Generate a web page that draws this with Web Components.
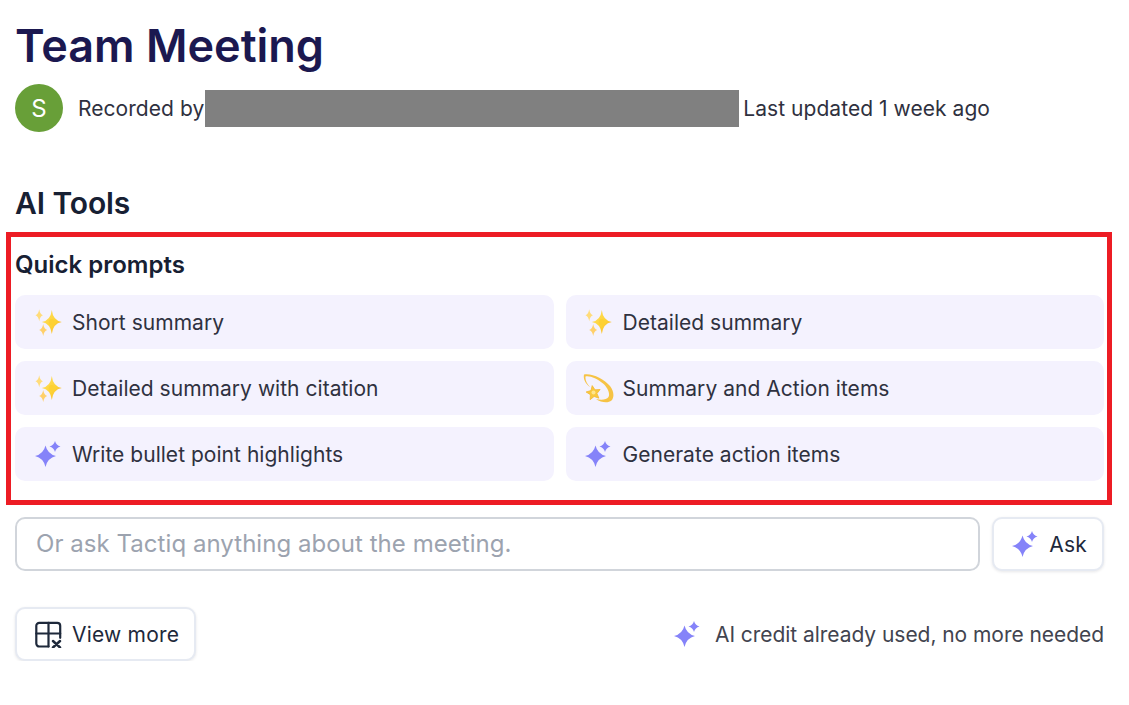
<!DOCTYPE html>
<html>
<head>
<meta charset="utf-8">
<title>Team Meeting</title>
<style>
    html, body { margin: 0; background: #fff; }
    body { font-family: Inter, "Liberation Sans", sans-serif; }
</style>
</head>
<body>
<meeting-page></meeting-page>

<script>
const ICONS = {
    sparkles: `<svg class="emoji" width="30" height="30" viewBox="0 0 30 30">
        <linearGradient id="gold" x1="0" y1="0" x2="1" y2="1">
            <stop offset="0" stop-color="#ffe26a"/>
            <stop offset=".6" stop-color="#fdd133"/>
            <stop offset="1" stop-color="#f8a83c"/>
        </linearGradient>
        <path fill="url(#gold)" d="M18.800 3Q20 13.500 28.800 15Q20 16.500 18.800 27Q17.600 16.500 8.800 15Q17.600 13.500 18.800 3z"/>
        <circle cx="18.800" cy="15" r="3" fill="#fdd133"/>
        <path fill="#ffdc7a" d="M6.200 2.300Q7 7.300 9.900 8.300Q7 9.300 6.200 14.300Q5.400 9.300 2.500 8.300Q5.400 7.300 6.200 2.300z"/>
        <path fill="#ffd06a" d="M10.200 17Q11 22 14.200 23Q11 24 10.200 29Q9.400 24 6.200 23Q9.400 22 10.200 17z"/>
    </svg>`,
    dizzy: `<svg class="emoji" width="32" height="32" viewBox="0 0 32 32">
        <path fill="#f6c345" d="M2 2.500C10 1 22 7 28 14C32 19 32.500 25 29.500 28.500C26 31.500 19 30.500 14 27C20 28.500 24.500 27.500 26.500 25C28.500 21 25 15 21 11.500C15 6.500 8 3.500 3.500 4.500C3 8 5 12 8 15C3.500 12 1 7 2 2.500z"/>
        <path fill="#f9c93f" stroke="#f3b834" stroke-width=".8" stroke-linejoin="round" d="M10.200 13.600L13 17.850L18.100 17.500L14.970 21.500L16.900 26.200L12.100 24.450L8.200 27.700L8.410 22.640L4.100 20L9 18.570z"/>
        <circle cx="11.500" cy="20.500" r="2" fill="#ffe58c"/>
    </svg>`,
    spark: `<svg width="26" height="26" viewBox="0 0 26 26">
        <path fill="#8583f9" d="M10.500 4.500Q12.500 13 21 15Q12.500 17 10.500 26Q8.500 17 0 15Q8.500 13 10.500 4.500z"/>
        <path fill="#8583f9" d="M20 0Q21.200 4.300 25.500 5.500Q21.200 6.700 20 11Q18.800 6.700 14.500 5.500Q18.800 4.300 20 0z"/>
    </svg>`,
    table: `<svg width="28" height="28" viewBox="0 0 28 28" fill="none" stroke="#1e293b" stroke-width="2.200" stroke-linecap="round" stroke-linejoin="round">
        <path d="M14.500 26.500H5.300a3 3 0 0 1-3-3V5.800a3 3 0 0 1 3-3h17.900a3 3 0 0 1 3 3v12"/>
        <path d="M2.300 13.500h23.900M14.500 2.800v23.700"/>
        <path stroke-width="2.500" d="M19 21l7 6.500M26 21l-7 6.500"/>
    </svg>`
};

class PromptButton extends HTMLElement {
    constructor()
    {
        super();
        this.attachShadow({mode: 'open'});
        this.shadowRoot.innerHTML = `
            <style>
                :host { display: flex; align-items: center; height: 54px; background: #f4f2fe; border-radius: 10px; font-size: 21px; letter-spacing: .03px; color: #2f3140; box-sizing: border-box; }
                .icon { width: 57px; display: flex; justify-content: center; padding-left: 8px; box-sizing: border-box; }
                svg { display: block; }
                .emoji { filter: blur(.3px); }
            </style>
            <span class="icon">${ICONS[this.getAttribute('icon')]}</span>
            <slot></slot>
        `;
    }
}
customElements.define('prompt-button', PromptButton);

class ActionButton extends HTMLElement {
    constructor()
    {
        super();
        this.attachShadow({mode: 'open'});
        this.shadowRoot.innerHTML = `
            <style>
                :host { display: inline-flex; align-items: center; gap: 10px; height: 54px; padding: 0 15px 0 17px; background: #fff; border: 2px solid #e6eaf2; border-radius: 10px; box-shadow: 0 1px 3px rgba(15,23,42,.1); font-size: 21px; letter-spacing: .2px; font-weight: 400; color: #1e293b; box-sizing: border-box; flex: none; }
                .icon { width: 28px; display: flex; justify-content: center; }
                svg { display: block; }
            </style>
            <span class="icon">${ICONS[this.getAttribute('icon')]}</span>
            <slot></slot>
        `;
    }
}
customElements.define('action-button', ActionButton);

class AskBox extends HTMLElement {
    constructor()
    {
        super();
        this.attachShadow({mode: 'open'});
        this.shadowRoot.innerHTML = `
            <style>
                :host { display: flex; gap: 12px; margin-top: 12px; }
                .input { flex: 1; height: 54px; box-sizing: border-box; border: 2px solid #d1d5db; border-radius: 10px; padding: 0 19px 2px; display: flex; align-items: center; font-size: 24px; letter-spacing: .05px; color: #9ca3af; }
            </style>
            <div class="input">Or ask Tactiq anything about the meeting.</div>
            <action-button icon="spark">Ask</action-button>
        `;
    }
}
customElements.define('ask-box', AskBox);

class QuickPrompts extends HTMLElement {
    constructor()
    {
        super();
        this.attachShadow({mode: 'open'});
        this.shadowRoot.innerHTML = `
            <style>
                :host { display: block; margin: 11px -8px 0 -9px; padding: 13px 3px 19px 4px; border: 5px solid #ed1c24; }
                h3 { margin: 0 0 15px; font-size: 24px; line-height: 30px; font-weight: 600; color: #172033; }
                .grid { display: grid; grid-template-columns: 1fr 1fr; gap: 12px; }
            </style>
            <h3>Quick prompts</h3>
            <div class="grid"><slot></slot></div>
        `;
    }
}
customElements.define('quick-prompts', QuickPrompts);

class MeetingPage extends HTMLElement {
    constructor()
    {
        super();
        this.attachShadow({mode: 'open'});
        this.shadowRoot.innerHTML = `
            <style>
                :host { display: block; padding: 18px 25px 0 15px; }
                h1 { margin: 0; font-size: 45px; line-height: 56px; font-weight: 600; color: #1b1850; }
                .meta { display: flex; align-items: center; height: 48px; margin-top: 10px; font-size: 21px; letter-spacing: .05px; color: #2f3140; }
                .avatar { width: 48px; height: 48px; border-radius: 50%; background: #689f38; color: #fff; font-size: 24px; display: flex; align-items: center; justify-content: center; margin-right: 15px; }
                .redact { width: 534px; height: 37px; background: #808080; margin: 0 4px 0 1px; }
                h2 { margin: 53px 0 0; font-size: 30px; line-height: 36px; font-weight: 600; letter-spacing: -.1px; color: #172033; }
                .foot { display: flex; align-items: center; justify-content: space-between; margin-top: 36px; }
                .credit { display: flex; align-items: center; gap: 15px; font-size: 21px; letter-spacing: -.05px; color: #42444f; }
                svg { display: block; }
            </style>
            <h1>Team Meeting</h1>
            <div class="meta">
                <span class="avatar">S</span>
                <span>Recorded by</span>
                <span class="redact"></span>
                <span>Last updated 1 week ago</span>
            </div>
            <h2>AI Tools</h2>
            <quick-prompts>
                <prompt-button icon="sparkles">Short summary</prompt-button>
                <prompt-button icon="sparkles">Detailed summary</prompt-button>
                <prompt-button icon="sparkles">Detailed summary with citation</prompt-button>
                <prompt-button icon="dizzy">Summary and Action items</prompt-button>
                <prompt-button icon="spark">Write bullet point highlights</prompt-button>
                <prompt-button icon="spark">Generate action items</prompt-button>
            </quick-prompts>
            <ask-box></ask-box>
            <div class="foot">
                <action-button icon="table">View more</action-button>
                <span class="credit">${ICONS.spark}<span>AI credit already used, no more needed</span></span>
            </div>
        `;
    }
}
customElements.define('meeting-page', MeetingPage);
</script>
</body>
</html>
